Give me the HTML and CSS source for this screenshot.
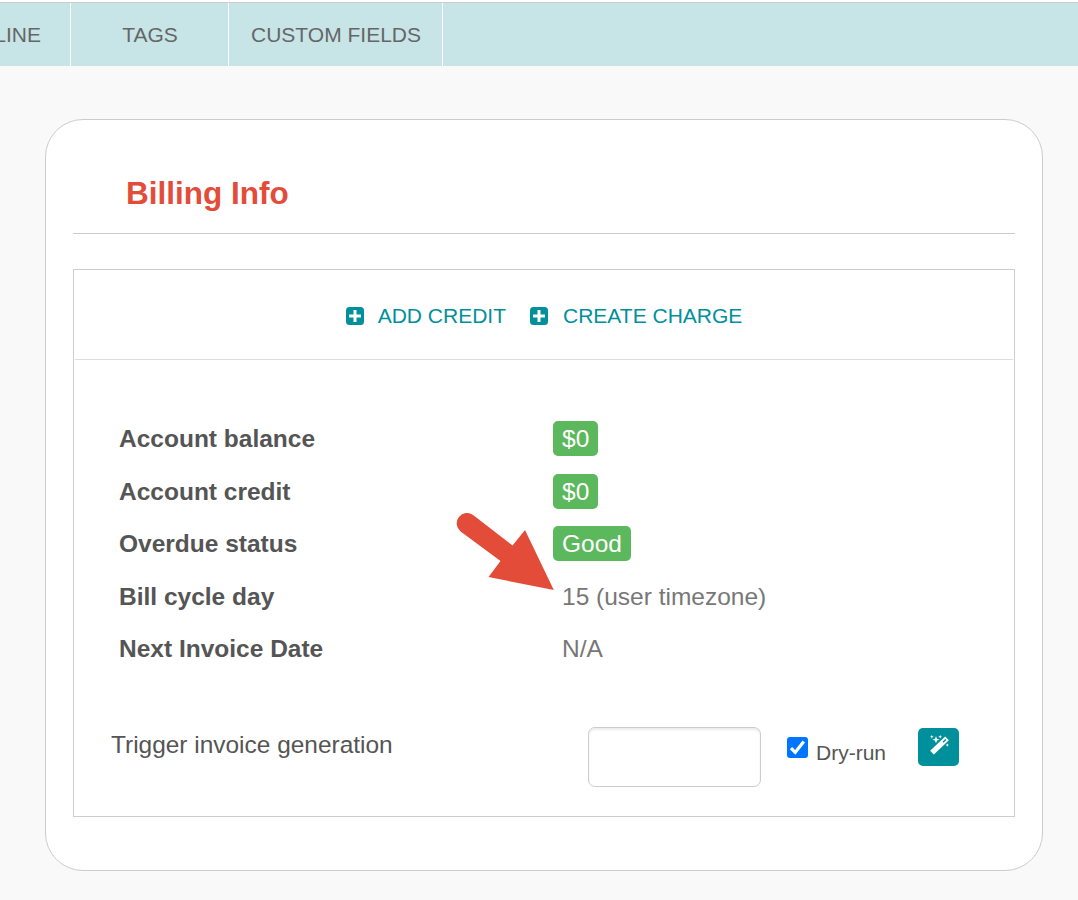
FILE: index.html
```html
<!DOCTYPE html>
<html lang="en">
<head>
<meta charset="utf-8">
<title>Billing Info</title>
<link rel="stylesheet" href="styles.css">
</head>
<body>
<nav class="tabs">
  <a class="tab tab-timeline">TIMELINE</a>
  <a class="tab tab-tags">TAGS</a>
  <a class="tab tab-fields">CUSTOM FIELDS</a>
</nav>
<main class="card">
  <h1 class="title">Billing Info</h1>
  <section class="panel">
    <div class="actions">
      <a class="action"><svg class="plus" viewBox="0 0 18 18"><rect width="18" height="18" rx="3.5"/><path d="M9 3v12M3 9h12"/></svg>ADD CREDIT</a>
      <a class="action"><svg class="plus" viewBox="0 0 18 18"><rect width="18" height="18" rx="3.5"/><path d="M9 3v12M3 9h12"/></svg>CREATE CHARGE</a>
    </div>
    <dl class="info">
      <dt>Account balance</dt><dd><span class="badge">$0</span></dd>
      <dt>Account credit</dt><dd><span class="badge">$0</span></dd>
      <dt>Overdue status</dt><dd><span class="badge">Good</span></dd>
      <dt>Bill cycle day</dt><dd class="plain">15 (user timezone)</dd>
      <dt>Next Invoice Date</dt><dd class="plain">N/A</dd>
    </dl>
    <form class="trigger">
      <label class="trigger-label" for="date">Trigger invoice generation</label>
      <input class="date" id="date" type="text">
      <span class="check"><svg viewBox="0 0 21 21"><rect width="21" height="21" rx="3"/><path d="M4 11.2l4.2 4.2L16.8 4.6"/></svg></span>
      <span class="dry">Dry-run</span>
      <button class="wand" type="button"><svg viewBox="0 0 20 20"><path class="stick" d="M3 17.6L18 3.4"/><path class="tip" d="M14 7.2l2.8-2.7"/><path class="spark" d="M7 1.2l1.1 2.6 2.4.9-2.4.9L7 8.2 5.9 5.6l-2.4-.9 2.4-.9zM2.8 0l.6 1.3 1.3.5-1.3.5-.6 1.3-.6-1.3-1.3-.5 1.3-.5zM11.2 0l.6 1.3 1.3.5-1.3.5-.6 1.3-.6-1.3-1.3-.5 1.3-.5zM18.3 8.4l.6 1.2 1.1.5-1.1.5-.6 1.2-.6-1.2-1.1-.5 1.1-.5z"/></svg></button>
    </form>
  </section>
  <svg class="arrow" viewBox="0 0 100 80"><path d="M17.4 2.2L56.5 32.5L69 17L97.8 77L32.5 64L44.5 48L4.6 18.4A10.3 10.3 0 0 1 17.4 2.2Z"/></svg>
</main>
</body>
</html>
```

FILE: styles.css
```css
* { box-sizing: border-box; }
body {
  margin: 0;
  height: 900px;
  overflow: hidden;
  padding-top: 2px;
  background: linear-gradient(#fff 2px, #f9f9f9 2px);
  font-family: "Liberation Sans", Arial, sans-serif;
  color: #555;
}
.tabs {
  display: flex;
  height: 64px;
  background: #c7e5e6;
  border-top: 1px solid #ccc;
  font-size: 21px;
  line-height: 63px;
  color: #666;
}
.tab { border-right: 1px solid #fff; text-align: center; white-space: nowrap; }
.tab-timeline { width: 71px; display: flex; justify-content: flex-end; padding-right: 29px; }
.tab-tags { width: 158px; padding-left: 1px; }
.tab-fields { width: 214px; padding-left: 1px; }
.card {
  position: relative;
  width: 998px;
  height: 752px;
  margin: 53px 0 0 45px;
  padding: 0 27px;
  background: #fff;
  border: 1px solid #ccc;
  border-radius: 38px;
}
.title {
  margin: 0 0 35px;
  height: 114px;
  padding: 54px 0 0 53px;
  border-bottom: 1px solid #ccc;
  font-size: 31.5px;
  line-height: 38px;
  color: #e44c3a;
}
.panel { height: 548px; border: 1px solid #ccc; }
.actions {
  display: flex;
  justify-content: center;
  gap: 24px;
  height: 90px;
  margin: 0 1px;
  border-bottom: 1px solid #ddd;
  font-size: 21px;
  line-height: 92px;
  color: #00909c;
}
.action { display: flex; align-items: center; height: 92px; }
.plus { width: 18px; height: 18px; margin: 0 14px 1px 0; fill: #00909c; }
.action + .action .plus { margin-right: 15px; }
.plus path { stroke: #fff; stroke-width: 3; }
.info {
  display: grid;
  grid-template-columns: 434px 1fr;
  grid-template-rows: 53px 52px 53px 52px 44px;
  align-items: start;
  margin: 61px 0 0 45px;
  font-size: 24.5px;
  line-height: 35px;
}
.info dt { font-weight: bold; }
.info dd { margin: 0; color: #777; }
.info .plain { padding-left: 9px; }
.badge {
  display: block;
  width: max-content;
  height: 35px;
  padding: 0 9px;
  border-radius: 5px;
  background: #5cb85c;
  color: #fff;
}
.trigger { display: flex; align-items: flex-start; margin: 52px 0 0 37px; }
.trigger-label { width: 477px; font-size: 24.45px; line-height: 35px; }
.date {
  width: 173px;
  height: 60px;
  margin: 0;
  border: 1px solid #ccc;
  border-radius: 7px;
  box-shadow: inset 0 2px 2px rgba(0,0,0,.075);
}
.check { width: 21px; height: 21px; margin: 10px 8px 0 26px; }
.check svg { display: block; fill: #0075ff; }
.check path { fill: none; stroke: #fff; stroke-width: 3.2; }
.dry { width: 102px; font-size: 21px; line-height: 24px; margin-top: 14px; }
.wand {
  display: flex;
  align-items: flex-start;
  width: 41px;
  height: 38px;
  margin-top: 1px;
  padding: 7px 0 0 11px;
  border: 0;
  border-radius: 5px;
  background: #00909c;
}
.wand svg { display: block; flex: none; width: 20px; height: 20px; fill: #fff; }
.stick { stroke: #fff; stroke-width: 5.4; }
.tip { stroke: #00909c; stroke-width: 1.5; }
.arrow { position: absolute; left: 410px; top: 393px; width: 100px; height: 80px; fill: #e44c3a; }
```
